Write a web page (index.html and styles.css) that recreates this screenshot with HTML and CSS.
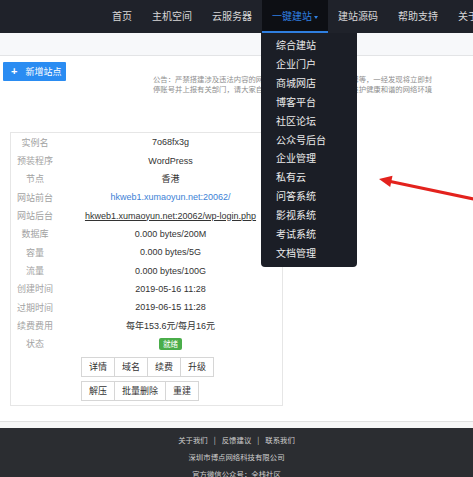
FILE: index.html
```html
<!DOCTYPE html>
<html lang="zh-CN">
<head>
<meta charset="utf-8">
<title>站点管理</title>
<link rel="stylesheet" href="styles.css">
</head>
<body>
<header class="topbar">
  <ul class="menu">
    <li class="menu-item">首页</li>
    <li class="menu-item">主机空间</li>
    <li class="menu-item">云服务器</li>
    <li class="menu-item active">一键建站<span class="caret"></span></li>
    <li class="menu-item">建站源码</li>
    <li class="menu-item">帮助支持</li>
    <li class="menu-item">关于我们</li>
  </ul>
  <ul class="dropdown">
    <li>综合建站</li>
    <li>企业门户</li>
    <li>商城网店</li>
    <li>博客平台</li>
    <li>社区论坛</li>
    <li>公众号后台</li>
    <li>企业管理</li>
    <li>私有云</li>
    <li>问答系统</li>
    <li>影视系统</li>
    <li>考试系统</li>
    <li>文档管理</li>
  </ul>
</header>
<div class="subbar"></div>
<main class="content">
  <div class="toolbar">
    <button class="add-btn"><span class="plus">+</span>新增站点</button>
    <div class="notice">
      <p>公告：严禁搭建涉及违法内容的网站，包括但不限于色情、赌博等，一经发现将立即封</p>
      <p>停账号并上报有关部门，请大家自觉遵守国家法律法规，共同维护健康和谐的网络环境</p>
    </div>
  </div>
  <section class="site-card">
    <div class="info-row"><span class="label">实例名</span><span class="value">7o68fx3g</span></div>
    <div class="info-row"><span class="label">预装程序</span><span class="value">WordPress</span></div>
    <div class="info-row"><span class="label">节点</span><span class="value">香港</span></div>
    <div class="info-row"><span class="label">网站前台</span><span class="value"><a class="link" href="#">hkweb1.xumaoyun.net:20062/</a></span></div>
    <div class="info-row"><span class="label">网站后台</span><span class="value"><a class="link visited" href="#">hkweb1.xumaoyun.net:20062/wp-login.php</a></span></div>
    <div class="info-row"><span class="label">数据库</span><span class="value">0.000 bytes/200M</span></div>
    <div class="info-row"><span class="label">容量</span><span class="value">0.000 bytes/5G</span></div>
    <div class="info-row"><span class="label">流量</span><span class="value">0.000 bytes/100G</span></div>
    <div class="info-row"><span class="label">创建时间</span><span class="value">2019-05-16 11:28</span></div>
    <div class="info-row"><span class="label">过期时间</span><span class="value">2019-06-15 11:28</span></div>
    <div class="info-row"><span class="label">续费费用</span><span class="value">每年153.6元/每月16元</span></div>
    <div class="info-row"><span class="label">状态</span><span class="value"><span class="badge">就绪</span></span></div>
    <div class="actions">
      <div class="btn-group">
        <button class="act-btn">详情</button><button class="act-btn">域名</button><button class="act-btn">续费</button><button class="act-btn">升级</button>
      </div>
      <div class="btn-group">
        <button class="act-btn">解压</button><button class="act-btn">批量删除</button><button class="act-btn">重建</button>
      </div>
    </div>
  </section>
</main>
<div class="footer-sep"></div>
<footer class="footer">
  <p><a href="#">关于我们</a><span class="sep">|</span><a href="#">反馈建议</a><span class="sep">|</span><a href="#">联系我们</a></p>
  <p>深圳市博点网络科技有限公司</p>
  <p>官方微信公众号：全栈社区</p>
</footer>
<svg class="pointer-arrow" width="104" height="36" viewBox="0 0 104 36">
  <line x1="18" y1="11" x2="106" y2="29.5" stroke="#e3221d" stroke-width="3"/>
  <polygon points="9,9 22.5,5.8 20.2,17" fill="#e3221d"/>
</svg>
</body>
</html>
```
FILE: styles.css
```css
html, body {
  margin: 0;
  padding: 0;
  overflow: hidden;
}
body {
  position: relative;
  width: 473px;
  height: 477px;
  background: #fff;
  font-family: "Noto Sans CJK SC", "Liberation Sans", sans-serif;
}
ul, p { margin: 0; padding: 0; list-style: none; }
a { text-decoration: none; color: inherit; }

.topbar {
  position: relative;
  height: 33px;
  background: #1f222a;
  z-index: 5;
}
.menu {
  display: flex;
  padding-left: 102px;
  height: 33px;
  white-space: nowrap;
  overflow: hidden;
}
.menu-item {
  flex-shrink: 0;
  padding: 0 10px;
  font-size: 10px;
  line-height: 31px;
  color: #d8d8d8;
  border-bottom: 2px solid transparent;
}
.menu-item.active {
  background: #0d0f14;
  color: #2f7fe0;
  border-bottom-color: #2f7fe0;
}
.caret {
  display: inline-block;
  width: 0;
  height: 0;
  margin-left: 2px;
  vertical-align: middle;
  border-left: 2.5px solid transparent;
  border-right: 2.5px solid transparent;
  border-top: 3px solid #2f7fe0;
}
.dropdown {
  position: absolute;
  left: 261px;
  top: 33px;
  width: 96px;
  padding: 3px 0 4.5px;
  background: #1b1e26;
  border-radius: 0 0 4px 4px;
}
.dropdown li {
  padding-left: 15px;
  font-size: 10px;
  line-height: 18.9px;
  color: #ececec;
  white-space: nowrap;
}

.subbar {
  height: 22px;
  background: #f7f8fa;
  border-bottom: 1px solid #e3e4e6;
}
.content {
  padding-left: 3px;
}
.toolbar {
  display: flex;
  align-items: flex-start;
  margin-top: 6px;
}
.add-btn {
  height: 19px;
  width: 63px;
  padding: 0;
  border: none;
  border-radius: 1px;
  background: #2a8cf2;
  color: #fff;
  font-family: inherit;
  font-size: 9px;
  line-height: 19px;
  text-align: left;
  padding-left: 8px;
}
.plus {
  font-family: "Liberation Sans", sans-serif;
  font-weight: bold;
  font-size: 11px;
  margin-right: 8px;
}
.notice {
  margin-left: 87px;
  margin-top: 11.5px;
  color: #8f8f8f;
  font-size: 7.35px;
  line-height: 10.5px;
  white-space: nowrap;
}

.site-card {
  width: 271px;
  margin: 37.5px 0 0 7px;
  border: 1px solid #e6e6e6;
  padding-bottom: 4.5px;
}
.info-row {
  display: flex;
  align-items: center;
  height: 18.35px;
  font-size: 9px;
}
.label {
  width: 48px;
  text-align: center;
  color: #a2a2a2;
}
.value {
  flex: 1;
  text-align: center;
  color: #333;
  font-family: "Liberation Sans", "Noto Sans CJK SC", sans-serif;
  white-space: nowrap;
}
.link { color: #3d7fd6; }
.link.visited { color: #333; text-decoration: underline; }
.badge {
  display: inline-block;
  padding: 0 4px;
  background: #4aad4a;
  color: #fff;
  border-radius: 2px;
  font-family: "Noto Sans CJK SC", sans-serif;
  font-size: 7.5px;
  line-height: 12px;
  vertical-align: middle;
}
.actions {
  display: flex;
  flex-direction: column;
  gap: 4px;
  margin: 3.5px 0 0 70px;
}
.btn-group {
  display: flex;
}
.act-btn {
  height: 20px;
  padding: 0 7px;
  margin-left: -1px;
  border: 1px solid #d6d6d6;
  background: #fff;
  color: #333;
  font-family: inherit;
  font-size: 9px;
  line-height: 18px;
}
.act-btn:first-child { margin-left: 0; }

.footer-sep {
  margin-top: 14.5px;
  height: 6px;
  border-top: 1px solid #e0e0e0;
  background: #f6f6f6;
}
.footer {
  height: 60px;
  padding-top: 3px;
  background: #2b2d31;
  color: #cfcfcf;
  font-size: 7.4px;
  line-height: 17px;
  text-align: center;
}
.sep {
  margin: 0 6px;
}

.pointer-arrow {
  position: absolute;
  left: 370px;
  top: 170px;
  overflow: visible;
}
```
